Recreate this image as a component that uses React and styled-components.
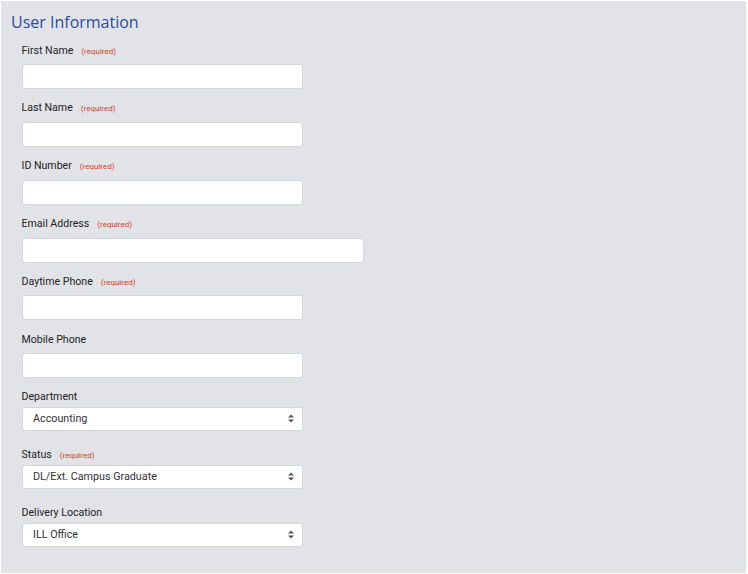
import React from "react";
import styled, { createGlobalStyle } from "styled-components";

const Global = createGlobalStyle`
  html, body { margin: 0; padding: 0; background: #ffffff; }
  body { font-family: Roboto, "Liberation Sans", Arial, sans-serif; }
  * { box-sizing: border-box; }
`;

const Panel = styled.section`
  margin: 1px 2px 1px 1px;
  height: 572px;
  background: #e2e3e7;
  padding: 9px 10px 0 10px;
  overflow: hidden;
`;

const Title = styled.h2`
  margin: 0 0 8.7px 0;
  font-family: "Open Sans", "Noto Sans", sans-serif;
  font-weight: 400;
  font-size: 16px;
  line-height: 24px;
  color: #2c4b9e;
`;

const Fields = styled.div`
  display: flex;
  flex-direction: column;
  padding-left: 10.5px;
`;

const Group = styled.div`
  display: flex;
  flex-direction: column;
  margin-bottom: ${(p) => (p.$select ? "16.3px" : "11.2px")};
`;

const Label = styled.label`
  display: block;
  height: 16px;
  font-size: 10.6px;
  line-height: 16px;
  color: #222;
  white-space: nowrap;
  margin-bottom: ${(p) => (p.$select ? "1.4px" : "5.6px")};
`;

const Required = styled.span`
  font-size: 8px;
  line-height: 0;
  color: #cf3f2a;
  margin-left: 8px;
`;

const TextInput = styled.input`
  display: block;
  width: ${(p) => (p.$wide ? "342px" : "281px")};
  height: 25px;
  margin: 0;
  border: 1px solid #d3d6db;
  border-radius: 3px;
  background: #fff;
  padding: 0 10px;
  font: inherit;
  font-size: 11px;
  outline: none;
`;

const SelectBox = styled.div`
  width: 281px;
  height: 24.3px;
  border: 1px solid #d3d6db;
  border-radius: 3px;
  background: #fff;
  display: flex;
  align-items: center;
  justify-content: space-between;
  padding: 0 8px 0 10.5px;
  font-size: 10.75px;
  color: #333;
`;

const Arrows = styled.svg`
  width: 6px;
  height: 9px;
  flex: none;
`;

const fields = [
  { label: "First Name", req: true },
  { label: "Last Name", req: true },
  { label: "ID Number", req: true },
  { label: "Email Address", req: true, wide: true },
  { label: "Daytime Phone", req: true },
  { label: "Mobile Phone" },
  { label: "Department", select: "Accounting" },
  { label: "Status", req: true, select: "DL/Ext. Campus Graduate" },
  { label: "Delivery Location", select: "ILL Office" },
];

export default function App() {
  return (
    <>
      <Global />
      <Panel>
        <Title>User Information</Title>
        <Fields>
          {fields.map((f) => (
            <Group key={f.label} $select={!!f.select}>
              <Label $select={!!f.select}>
                {f.label}
                {f.req && <Required>(required)</Required>}
              </Label>
              {f.select ? (
                <SelectBox>
                  <span>{f.select}</span>
                  <Arrows viewBox="0 0 6 9">
                    <path d="M0 3.5 L3 0.5 L6 3.5 Z M0 5.5 L3 8.5 L6 5.5 Z" fill="#555" />
                  </Arrows>
                </SelectBox>
              ) : (
                <TextInput type="text" $wide={f.wide} />
              )}
            </Group>
          ))}
        </Fields>
      </Panel>
    </>
  );
}
